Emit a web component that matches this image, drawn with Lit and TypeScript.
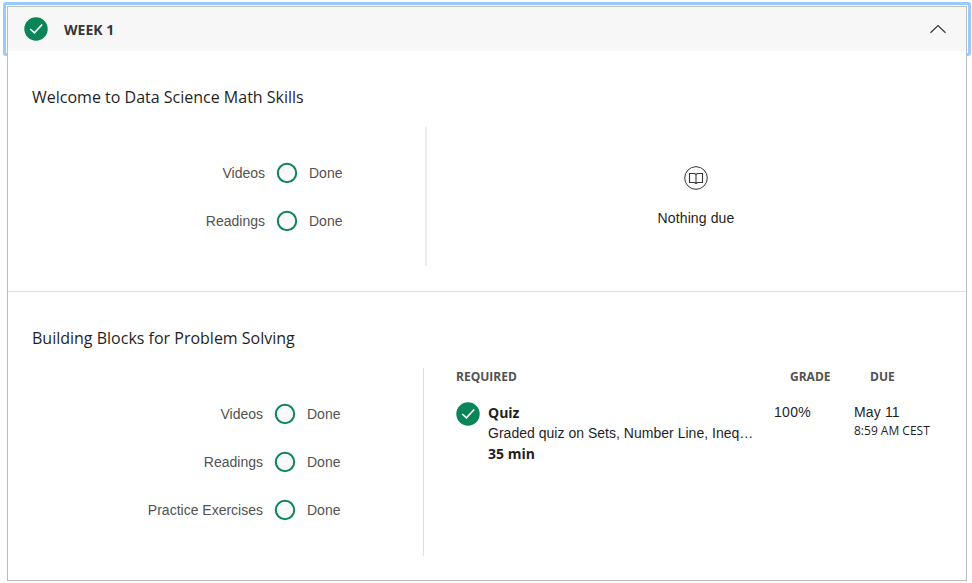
import { LitElement, html, css } from "lit";
import { customElement, property } from "lit/decorators.js";

@customElement("check-badge")
class CheckBadge extends LitElement {
  static styles = css`
    :host { display: block; width: 24px; height: 24px; flex: none; }
    svg { display: block; }
  `;
  render() {
    return html`<svg width="24" height="24" viewBox="0 0 24 24">
      <circle cx="12" cy="12" r="11.7" fill="#0a8558" />
      <path d="M6.2 12 10.4 15.9 18.2 7.5" fill="none" stroke="#fff" stroke-width="1.6" />
    </svg>`;
  }
}

@customElement("progress-list")
class ProgressList extends LitElement {
  @property({ attribute: false }) items: string[] = [];
  static styles = css`
    :host { display: flex; flex-direction: column; gap: 24px; }
    .row {
      display: grid; grid-template-columns: 1fr 22px 60px; column-gap: 11px;
      align-items: center; height: 24px; color: #525252;
      font: 14px/24px "Liberation Sans", Arial, sans-serif;
    }
    .label { text-align: right; white-space: nowrap; }
    svg { display: block; }
  `;
  render() {
    return this.items.map((label) => html`<div class="row">
      <span class="label">${label}</span>
      <svg width="22" height="22" viewBox="0 0 22 22"><circle cx="11" cy="11" r="9.2" fill="#f9f9f9" stroke="#0a8558" stroke-width="2" /></svg>
      <span>Done</span>
    </div>`);
  }
}

@customElement("app-root")
class AppRoot extends LitElement {
  static styles = css`
    :host {
      display: block; box-sizing: border-box; height: 583px; padding: 6px 5px 0 7px;
      background: #fff; color: #1f1f1f; overflow: hidden;
      font: 14px/20px "Liberation Sans", Arial, sans-serif;
    }
    .card { box-sizing: border-box; width: 960px; height: 575px; border: 1px solid #bdbdbd; }
    .header {
      position: relative; box-sizing: border-box; height: 44px; padding: 0 16px;
      display: flex; align-items: center; gap: 16px; background: #f7f7f7;
    }
    .header::after {
      content: ""; position: absolute; inset: -5px; border: 3px solid #97cbfb; border-radius: 3px;
    }
    .week { flex: 1; font: 700 14px/24px "Open Sans", sans-serif; color: #373737; padding-top: 2px; }
    .chevron { display: block; margin-right: 3px; }
    .body { position: relative; background: #fff; height: 529px; }
    .lesson { box-sizing: border-box; padding: 34px 24px 0; }
    .first { height: 241px; border-bottom: 1px solid #dedede; }
    .second { padding-top: 34px; }
    .title { margin: 0; font: 400 16px/24px "Open Sans", sans-serif; }
    .columns { display: flex; margin-top: 18px; }
    .left { box-sizing: border-box; flex: none; padding-top: 34px; padding-right: 56px; }
    .first .left { width: 395px; height: 139px; border-right: 2px solid #eee; }
    .second .left { width: 392px; height: 188px; border-right: 1px solid #dedede; }
    .empty { flex: 1; display: flex; flex-direction: column; align-items: center; padding: 39px 0 0 23px; letter-spacing: 0.12px; }
    .empty svg { display: block; margin-bottom: 18px; }
    .due { flex: 1; padding-left: 32px; }
    .grid { display: grid; grid-template-columns: 318px 80px 1fr; }
    .head { font: 700 12px/18px "Open Sans", sans-serif; color: #525252; height: 26px; }
    .inset { padding-left: 16px; }
    .item { display: flex; gap: 8px; padding-top: 8px; }
    .details { width: 266px; padding-top: 1px; }
    .name { font: 700 14px/20px "Open Sans", sans-serif; }
    .desc { white-space: nowrap; line-height: 21px; letter-spacing: 0.02px; }
    .cell { padding-top: 8px; line-height: 20px; }
    .grade { letter-spacing: 0.3px; }
    .date { letter-spacing: 0.15px; }
    .time { font: 12px/18px "Open Sans", sans-serif; white-space: nowrap; }
  `;
  render() {
    return html`<section class="card">
      <div class="header">
        <check-badge></check-badge>
        <span class="week">WEEK 1</span>
        <svg class="chevron" width="18" height="12" viewBox="0 0 18 12"><path d="M1.5 9.8 9 2.5 16.5 9.8" fill="none" stroke="#373737" stroke-width="1.2" /></svg>
      </div>
      <div class="body">
        <div class="lesson first">
          <h2 class="title">Welcome to Data Science Math Skills</h2>
          <div class="columns">
            <progress-list class="left" .items=${["Videos", "Readings"]}></progress-list>
            <div class="empty">
              <svg width="24" height="24" viewBox="0 0 24 24" fill="none" stroke="#373737">
                <circle cx="12" cy="12" r="11.3" stroke-width="1" />
                <path d="M5.5 7.5H10.5L12 8.5 13.5 7.5H18.5V16.5H13.5L12 17.5 10.5 16.5H5.5ZM12 8.5V17.5" stroke-width="1.1" />
              </svg>
              <span>Nothing due</span>
            </div>
          </div>
        </div>
        <div class="lesson second">
          <h2 class="title">Building Blocks for Problem Solving</h2>
          <div class="columns">
            <progress-list class="left" .items=${["Videos", "Readings", "Practice Exercises"]}></progress-list>
            <div class="due">
              <div class="grid">
                <div class="head">REQUIRED</div><div class="head inset">GRADE</div><div class="head inset">DUE</div>
                <div class="item">
                  <check-badge></check-badge>
                  <div class="details">
                    <div class="name">Quiz</div>
                    <div class="desc">Graded quiz on Sets, Number Line, Ineq…</div>
                    <div class="name">35 min</div>
                  </div>
                </div>
                <div class="cell grade">100%</div>
                <div class="cell"><div class="date">May 11</div><div class="time">8:59 AM CEST</div></div>
              </div>
            </div>
          </div>
        </div>
      </div>
    </section>`;
  }
}
